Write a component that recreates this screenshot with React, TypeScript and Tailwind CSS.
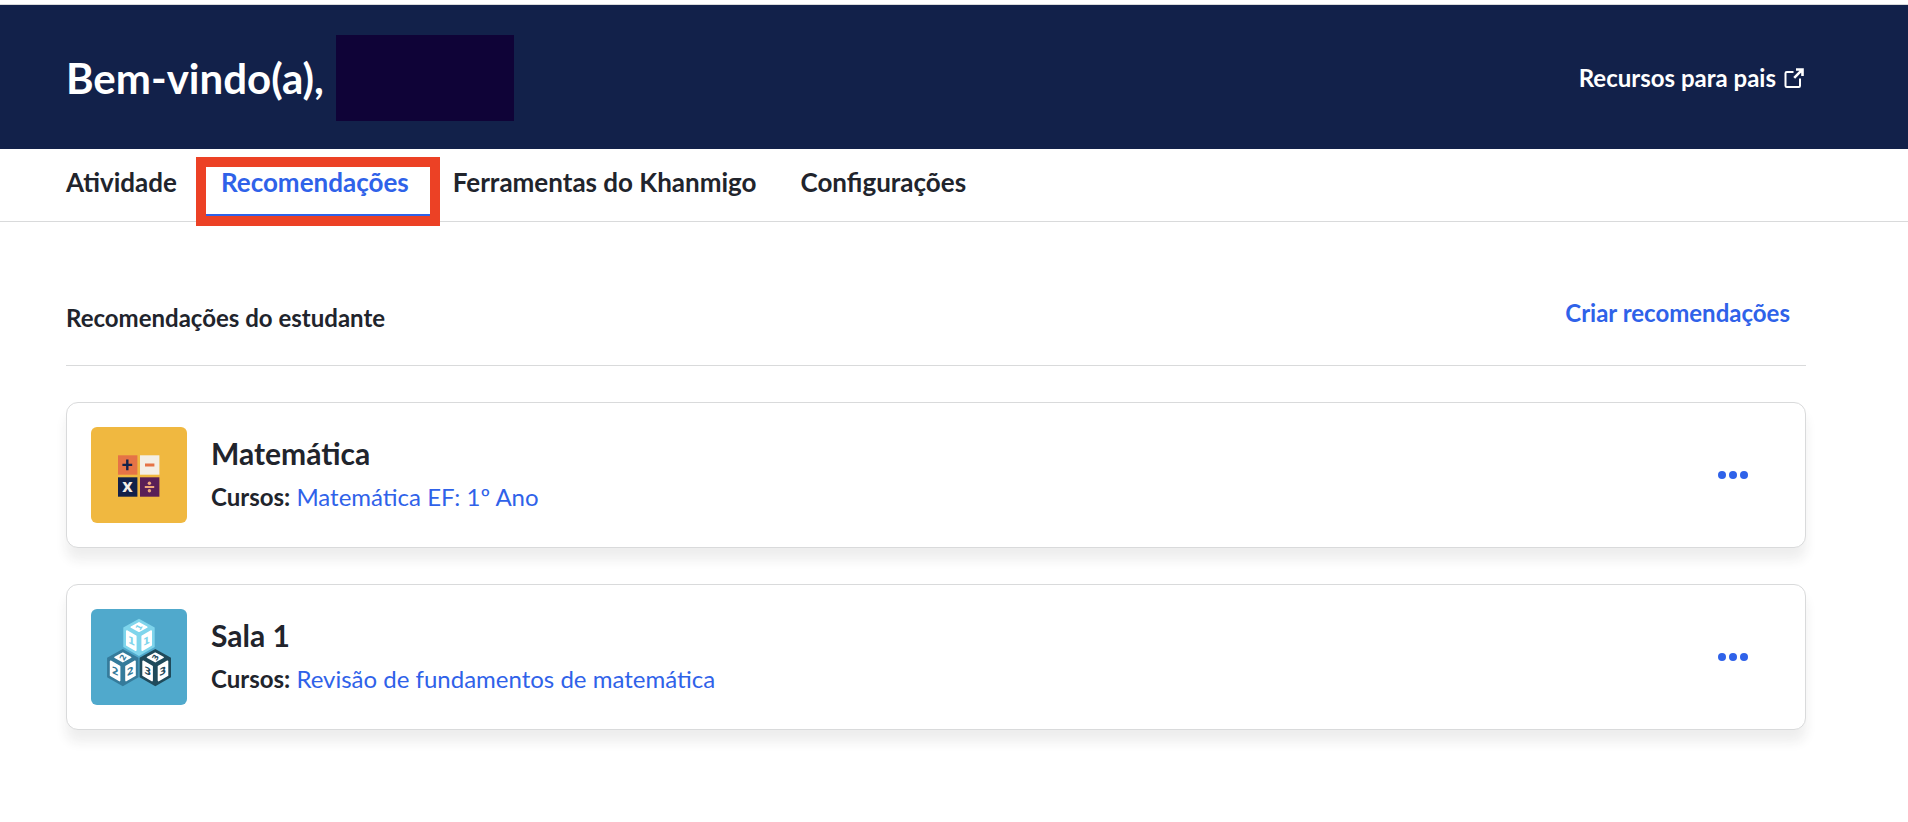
import React from 'react';

interface Recommendation {
  id: string;
  title: string;
  course: string;
  icon: React.ReactNode;
}

const tabs = ['Atividade', 'Recomendações', 'Ferramentas do Khanmigo', 'Configurações'];
const activeTab = 'Recomendações';

const ExternalIcon = () => (
  <svg viewBox="0 0 20 20" className="h-5 w-5" fill="none" stroke="currentColor" strokeWidth="2" aria-hidden="true">
    <path d="M9.5 4H2.8A1.3 1.3 0 0 0 1.5 5.3v12.4A1.3 1.3 0 0 0 2.8 19h12A1.3 1.3 0 0 0 16 17.7v-7.2" />
    <path d="M12 1.5h6.5V8M18.3 1.7 10.2 9.8" strokeWidth="2.6" />
  </svg>
);

const DotsIcon = () => (
  <svg viewBox="0 0 30 8" className="h-2 w-[30px]" fill="currentColor" aria-hidden="true">
    <circle cx="4" cy="4" r="4" />
    <circle cx="15" cy="4" r="4" />
    <circle cx="26" cy="4" r="4" />
  </svg>
);

const MathIcon = () => (
  <svg viewBox="0 0 96 96" className="h-24 w-24 shrink-0 rounded-md bg-[#f0b840]" aria-hidden="true">
    <rect x="27" y="28.3" width="19.4" height="19.4" fill="#e57346" />
    <rect x="49" y="28.3" width="19.4" height="19.4" fill="#f4efe6" />
    <rect x="27" y="50.3" width="19.4" height="19.4" fill="#12214a" />
    <rect x="49" y="50.3" width="19.4" height="19.4" fill="#5a1f57" />
    <path d="M36.3 32.5v10.8M31.4 37.9h9.8" stroke="#12214a" strokeWidth="2.4" />
    <path d="M54 38h9.4" stroke="#e57346" strokeWidth="2.8" />
    <text x="36.5" y="65" textAnchor="middle" fill="#f4efe6" className="font-['Noto_Sans'] text-[18px] font-bold">x</text>
    <path d="M53.8 60h9.4" stroke="#f0a97b" strokeWidth="2.2" />
    <circle cx="58.4" cy="56.3" r="1.7" fill="#f0a97b" />
    <circle cx="58.4" cy="63.7" r="1.7" fill="#f0a97b" />
  </svg>
);

const Cube = ({ x, y, digit, color }: { x: number; y: number; digit: string; color: string }) => (
  <g transform={`translate(${x} ${y})`}>
    <path d="M0 0 15.7 8.7V28.3L0 37.2-15.7 28.3V8.7Z" fill={color} />
    <g fill="#fff" stroke="#fff" strokeWidth="1.6" strokeLinejoin="round">
      <path d="M0 4.2 7.8 8.4 0 12.6-7.8 8.4Z" />
      <path d="M-12.2 12.3-3.2 17.4V31.6L-12.2 26.4Z" />
      <path d="M12.2 12.3 3.2 17.4V31.6L12.2 26.4Z" />
    </g>
    <g fill={color} textAnchor="middle" className="font-['DejaVu_Sans'] text-[10px] font-bold">
      <text transform="translate(-7.5 25.6) skewY(25)">{digit}</text>
      <text transform="translate(7.5 25.6) skewY(-25)">{digit}</text>
      <text transform="translate(2.5 9.9) rotate(-60)" className="text-[8px]">{digit}</text>
    </g>
  </g>
);

const CubesIcon = () => (
  <svg viewBox="0 0 96 96" className="h-24 w-24 shrink-0 rounded-md bg-[#50a9cc]" aria-hidden="true">
    <Cube x={48} y={9.7} digit="1" color="#7fd5ec" />
    <Cube x={31.8} y={40} digit="2" color="#357b9b" />
    <Cube x={64.3} y={40} digit="3" color="#1f4a5b" />
  </svg>
);

const recommendations: Recommendation[] = [
  { id: 'matematica', title: 'Matemática', course: 'Matemática EF: 1º Ano', icon: <MathIcon /> },
  { id: 'sala-1', title: 'Sala 1', course: 'Revisão de fundamentos de matemática', icon: <CubesIcon /> },
];

const RecommendationCard: React.FC<{ item: Recommendation }> = ({ item }) => (
  <li className="flex items-center gap-6 rounded-xl border border-[#d9dadb] bg-white p-6 pr-[49px] shadow-[0_12px_12px_rgba(33,36,44,0.08)]">
    {item.icon}
    <div className="min-w-0 flex-1">
      <h3 className="text-[30px] leading-10 font-bold">{item.title}</h3>
      <p className="mt-1 text-2xl leading-10">
        <span className="font-bold">Cursos:</span>{' '}
        <a href="#" className="text-[#2f62e9]">{item.course}</a>
      </p>
    </div>
    <button type="button" aria-label={`Opções de ${item.title}`} className="p-2 text-[#2f62e9]">
      <DotsIcon />
    </button>
  </li>
);

export default function App() {
  return (
    <div className="min-h-screen bg-white pt-1 font-['Lato',sans-serif] text-[#21242c]">
      <header className="flex h-[145px] items-center justify-between border-t border-[#d9dadb] bg-[#12214a] pt-0.5 pr-[104px] pl-[66px] text-white">
        <div className="flex items-center gap-3">
          <h1 className="text-[42px] leading-none font-bold">Bem-vindo(a),</h1>
          <div className="h-[86px] w-[178px] bg-[#0f0337]" />
        </div>
        <a href="#" className="flex items-center gap-2 text-2xl font-bold">
          Recursos para pais
          <ExternalIcon />
        </a>
      </header>

      <nav className="flex h-[73px] gap-11 border-b border-[#d9dadb] px-[66px] text-[26px] font-bold">
        {tabs.map(tab =>
          tab === activeTab ? (
            <div key={tab} className="relative">
              <a href="#" aria-current="page" className="flex h-full pt-[17px] leading-8 text-[#2f62e9]">{tab}</a>
              <div className="pointer-events-none absolute top-2 -right-[31px] -left-[25px] h-[69px] border-10 border-[#ec4125]">
                <div className="h-full border-b-2 border-[#2f62e9]" />
              </div>
            </div>
          ) : (
            <a key={tab} href="#" className="flex h-full pt-[17px] leading-8">{tab}</a>
          ),
        )}
      </nav>

      <main className="pt-[71px] pr-[102px] pl-[66px]">
        <div className="flex items-start justify-between border-b border-[#d9dadb] pb-[27px]">
          <h2 className="pt-[5px] text-2xl leading-10 font-bold">Recomendações do estudante</h2>
          <button type="button" className="pr-4 text-2xl leading-10 font-bold text-[#2f62e9]">Criar recomendações</button>
        </div>
        <ul className="mt-9 flex flex-col gap-9">
          {recommendations.map(item => (
            <RecommendationCard key={item.id} item={item} />
          ))}
        </ul>
      </main>
    </div>
  );
}
